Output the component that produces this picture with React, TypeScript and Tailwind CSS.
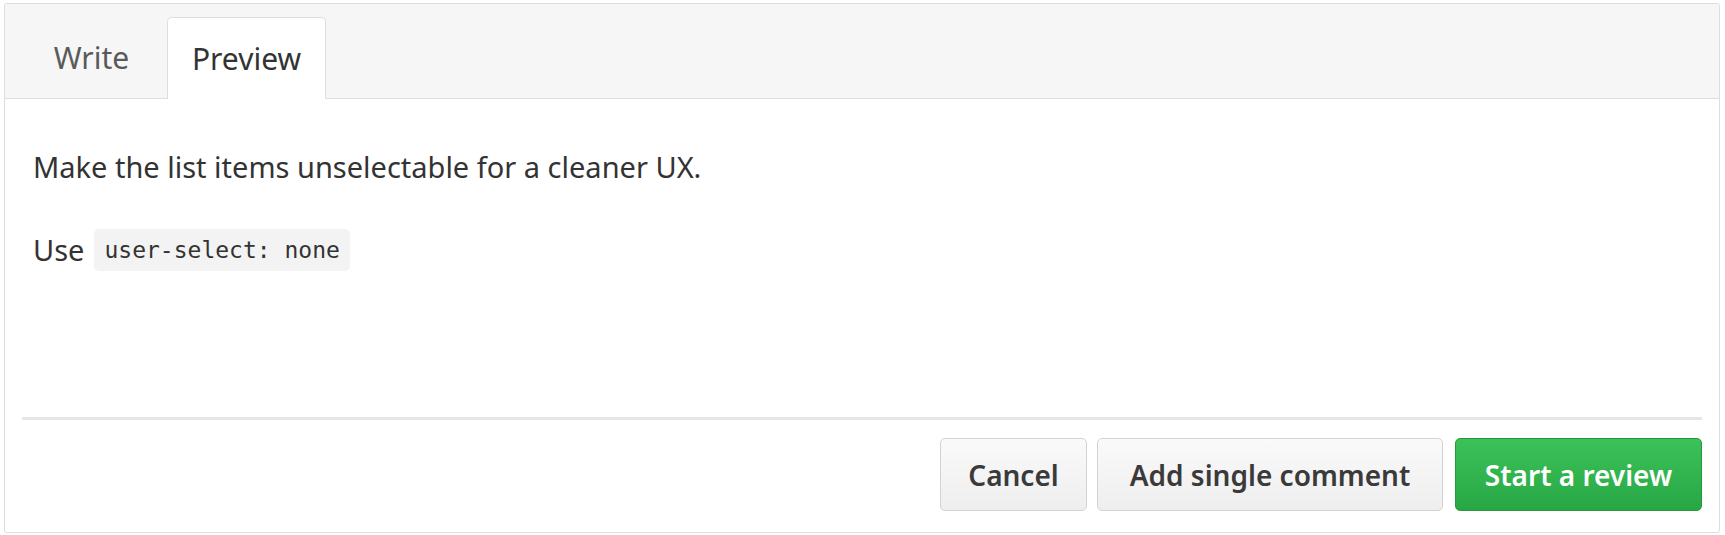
export default function App() {
  return (
    <div className="w-[1725px] h-[535px] bg-white pt-[3px] pl-[4px] pr-[5px] font-['Noto_Sans',sans-serif] text-[#333]">
      <div className="h-[530px] border border-[#dedede] rounded-[3px] flex flex-col overflow-hidden">
        {/* tabs */}
        <div className="h-[95px] shrink-0 bg-[#f6f6f6] border-b border-[#dedede] flex items-end pl-[23px]">
          <div className="w-[127px] h-[81px] flex items-center justify-center text-[30px] text-[#5a5a5a]">
            Write
          </div>
          <div className="ml-[12px] w-[159px] h-[82px] -mb-px bg-white border border-b-0 border-[#dedede] rounded-t-[5px] flex items-center justify-center text-[30px] text-[#333]">
            Preview
          </div>
        </div>

        {/* preview body */}
        <div className="flex-1 px-[17px] flex flex-col">
          <div className="pl-[11px] pt-[48px] text-[29px] leading-[40px] h-[321px] border-b-[3px] border-[#e6e6e6]">
            <p>Make the list items unselectable for a cleaner UX.</p>
            <p className="mt-[42px] flex items-center">
              Use
              <code className="ml-[10px] px-[10px] h-[42px] inline-flex items-center rounded-[5px] bg-[#f3f3f3] font-['DejaVu_Sans_Mono',monospace] text-[23px] text-[#333]">
                user-select: none
              </code>
            </p>
          </div>

          {/* actions */}
          <div className="pt-[18px] flex justify-end gap-[10px]">
            <button className="w-[147px] h-[73px] rounded-[5px] border border-[#d3d3d3] bg-gradient-to-b from-[#fafafa] to-[#eeeeee] text-[28px] font-semibold text-[#3a3a3a]">
              Cancel
            </button>
            <button className="w-[346px] h-[73px] rounded-[5px] border border-[#d3d3d3] bg-gradient-to-b from-[#fafafa] to-[#eeeeee] text-[28px] font-semibold text-[#3a3a3a]">
              Add single comment
            </button>
            <button className="ml-[2px] w-[247px] h-[73px] rounded-[5px] border border-[#25983f] bg-gradient-to-b from-[#3cc25a] to-[#27a744] text-[28px] font-semibold text-white">
              Start a review
            </button>
          </div>
        </div>
      </div>
    </div>
  )
}
